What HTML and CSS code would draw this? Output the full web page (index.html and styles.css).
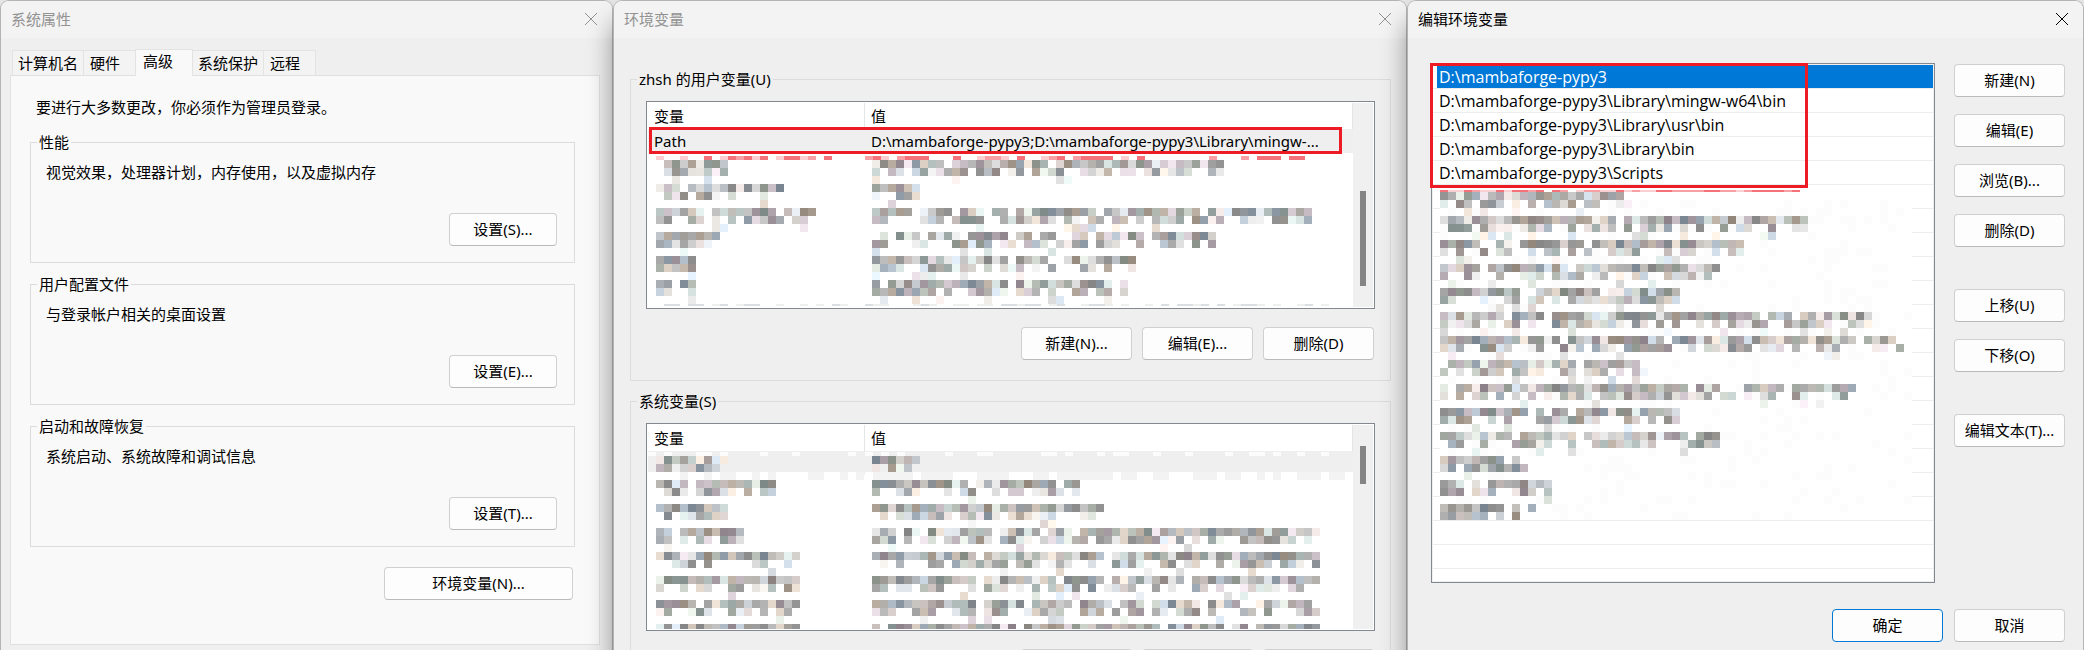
FILE: index.html
```html
<!DOCTYPE html>
<html lang="zh-CN">
<head>
<meta charset="utf-8">
<title>环境变量</title>
<link rel="stylesheet" href="styles.css">
</head>
<body>
<main class="desktop">
  <section class="window inactive" aria-label="系统属性">
    <header class="titlebar">
      <h1>系统属性</h1>
      <button class="close" type="button" aria-label="关闭"><svg viewBox="0 0 14 14"><path d="M1 1L13 13M13 1L1 13"/></svg></button>
    </header>
    <div class="props">
      <div class="tabs" role="tablist">
        <button type="button" role="tab" class="tab tab-wide">计算机名</button>
        <button type="button" role="tab" class="tab">硬件</button>
        <button type="button" role="tab" class="tab active" aria-selected="true">高级</button>
        <button type="button" role="tab" class="tab tab-wide">系统保护</button>
        <button type="button" role="tab" class="tab">远程</button>
      </div>
      <div class="panel" role="tabpanel">
        <p class="intro">要进行大多数更改，你必须作为管理员登录。</p>
        <fieldset class="group setting">
          <legend>性能</legend>
          <p>视觉效果，处理器计划，内存使用，以及虚拟内存</p>
          <button class="btn" type="button">设置(S)...</button>
        </fieldset>
        <fieldset class="group setting">
          <legend>用户配置文件</legend>
          <p>与登录帐户相关的桌面设置</p>
          <button class="btn" type="button">设置(E)...</button>
        </fieldset>
        <fieldset class="group setting">
          <legend>启动和故障恢复</legend>
          <p>系统启动、系统故障和调试信息</p>
          <button class="btn" type="button">设置(T)...</button>
        </fieldset>
        <button class="btn env-btn" type="button">环境变量(N)...</button>
      </div>
    </div>
  </section>

  <section class="window inactive" aria-label="环境变量">
    <header class="titlebar">
      <h1>环境变量</h1>
      <button class="close" type="button" aria-label="关闭"><svg viewBox="0 0 14 14"><path d="M1 1L13 13M13 1L1 13"/></svg></button>
    </header>
    <div class="vars">
      <fieldset class="group var-group">
        <legend>zhsh 的用户变量(U)</legend>
        <div class="listview">
          <div class="list-main">
            <table>
              <thead><tr><th class="name-col">变量</th><th>值</th></tr></thead>
              <tbody>
                <tr class="current"><td>Path</td><td>D:\mambaforge-pypy3;D:\mambaforge-pypy3\Library\mingw-...</td></tr>
                <tr class="masked"><td><canvas data-mosaic="userNames"></canvas></td><td><canvas data-mosaic="userValues"></canvas></td></tr>
              </tbody>
            </table>
            <div class="mark mark-row"></div>
          </div>
          <div class="scrollbar"><div class="thumb thumb-user"></div></div>
        </div>
        <div class="actions">
          <button class="btn" type="button">新建(N)...</button>
          <button class="btn" type="button">编辑(E)...</button>
          <button class="btn" type="button">删除(D)</button>
        </div>
      </fieldset>
      <fieldset class="group var-group">
        <legend>系统变量(S)</legend>
        <div class="listview">
          <div class="list-main">
            <table>
              <thead><tr><th class="name-col">变量</th><th>值</th></tr></thead>
              <tbody>
                <tr class="masked first-current"><td><canvas data-mosaic="sysNames"></canvas></td><td><canvas data-mosaic="sysValues"></canvas></td></tr>
              </tbody>
            </table>
          </div>
          <div class="scrollbar"><div class="thumb thumb-sys"></div></div>
        </div>
        <div class="actions">
          <button class="btn" type="button" aria-label="新建"></button>
          <button class="btn" type="button" aria-label="编辑"></button>
          <button class="btn" type="button" aria-label="删除"></button>
        </div>
      </fieldset>
    </div>
  </section>

  <section class="window" aria-label="编辑环境变量">
    <header class="titlebar">
      <h1>编辑环境变量</h1>
      <button class="close" type="button" aria-label="关闭"><svg viewBox="0 0 14 14"><path d="M1 1L13 13M13 1L1 13"/></svg></button>
    </header>
    <div class="editor">
      <div class="editor-main">
        <div class="paths">
          <ul>
            <li class="selected">D:\mambaforge-pypy3</li>
            <li>D:\mambaforge-pypy3\Library\mingw-w64\bin</li>
            <li>D:\mambaforge-pypy3\Library\usr\bin</li>
            <li>D:\mambaforge-pypy3\Library\bin</li>
            <li>D:\mambaforge-pypy3\Scripts</li>
          </ul>
          <canvas data-mosaic="paths"></canvas>
          <div class="mark mark-paths"></div>
        </div>
        <div class="side">
          <button class="btn" type="button">新建(N)</button>
          <button class="btn" type="button">编辑(E)</button>
          <button class="btn" type="button">浏览(B)...</button>
          <button class="btn" type="button">删除(D)</button>
          <button class="btn apart" type="button">上移(U)</button>
          <button class="btn" type="button">下移(O)</button>
          <button class="btn apart" type="button">编辑文本(T)...</button>
        </div>
      </div>
      <footer class="confirm">
        <button class="btn primary" type="button">确定</button>
        <button class="btn" type="button">取消</button>
      </footer>
    </div>
  </section>
</main>
<script src="mosaic.js"></script>
</body>
</html>
```
FILE: styles.css
```css
* { box-sizing: border-box; }
body {
  margin: 0;
  background: #e6e6e6;
  color: #000;
  font: 15px/20px "Noto Sans", "Noto Sans CJK SC", sans-serif;
  overflow: hidden;
}
h1, p, ul { margin: 0; padding: 0; font-size: 15px; font-weight: 400; }
ul { list-style: none; }
button { font: inherit; color: inherit; }
.desktop { display: grid; grid-template-columns: 613fr 794fr 677fr; height: 100vh; overflow: hidden; }

.window {
  display: flex;
  flex-direction: column;
  min-width: 0;
  min-height: 0;
  background: #efefef;
  border: 1px solid #b4b4b4;
  border-bottom: 0;
  border-radius: 9px 9px 0 0;
  box-shadow: 0 22px 26px rgba(0, 0, 0, .4);
}
.titlebar {
  flex: none;
  display: flex;
  align-items: center;
  justify-content: space-between;
  height: 37px;
  padding: 0 14px 2px 10px;
  background: #f3f3f3;
  border-radius: 8px 8px 0 0;
}
.inactive .titlebar { color: #929292; }
.close { display: flex; padding: 0; border: 0; background: none; }
.close svg { width: 14px; height: 14px; fill: none; stroke: currentColor; stroke-width: 1; }

.btn {
  height: 33px;
  padding: 0 4px 2px;
  border: 1px solid #d0d0d0;
  border-bottom-color: #bababa;
  border-radius: 4px;
  background: #fdfdfd;
  white-space: nowrap;
}
.btn.primary { border-color: #0078d4; }

.group { margin: 0; padding: 0; min-width: 0; border: 1px solid #dcdcdc; }
.group legend { margin-left: -9px; padding: 0 2px; }

.props { flex: 1; display: flex; flex-direction: column; min-height: 0; padding: 11px 12px 5px 9px; }
.tabs { display: flex; align-items: flex-end; padding-left: 2px; }
.tab {
  width: 53px;
  height: 25px;
  margin-right: -1px;
  padding: 0 0 1px 6px;
  border: 1px solid #e3e3e3;
  border-bottom: 0;
  background: #f3f3f3;
  text-align: left;
}
.tab-wide { width: 72px; padding-left: 5px; }
.tab.active { position: relative; width: 58px; height: 27px; margin-bottom: -1px; padding: 0 0 5px 7px; background: #f9f9f9; }
.panel {
  flex: 1;
  display: flex;
  flex-direction: column;
  padding: 21px 24px 0 19px;
  border: 1px solid #e0e0e0;
  background: #f9f9f9;
}
.intro { margin: 0 0 15px 6px; }
.setting { margin-bottom: 11px; padding: 10px 17px 16px 15px; }
.setting .btn { display: block; width: 108px; margin: 31px 0 0 auto; }
.env-btn { align-self: flex-end; width: 189px; margin: 9px 2px 0 0; }

.vars { padding: 31px 15px 0 16px; }
.var-group { margin-bottom: 10px; padding: 12px 15px 20px; }
.listview { display: flex; height: 208px; padding: 1px; border: 1px solid #828790; background: #fff; }
.list-main { position: relative; flex: 1; min-width: 0; overflow: hidden; }
table { width: 100%; table-layout: fixed; border-collapse: separate; border-spacing: 0; }
th { height: 26px; padding: 0 6px; border-right: 1px solid #e5e5e5; font-weight: 400; text-align: left; }
.name-col { width: 217px; }
td { height: 24px; padding: 0 6px; overflow: hidden; white-space: nowrap; }
.current td { background: #efefef; }
.masked td { padding: 0; }
.first-current td { background: linear-gradient(#efefef 24px, #fff 24px); }
canvas { display: block; }
.scrollbar { flex: none; width: 20px; background: #f0f0f0; }
.thumb { width: 6px; margin-left: 7px; background: #858585; }
.thumb-user { height: 95px; margin-top: 88px; }
.thumb-sys { height: 38px; margin-top: 21px; }
.actions { display: flex; justify-content: flex-end; gap: 10px; padding: 18px 1px 0 0; }
.actions .btn, .side .btn, .confirm .btn { width: 111px; }

.mark { position: absolute; border: 3px solid #ed1c24; pointer-events: none; }
.mark-row { top: 24px; left: 1px; right: 11px; height: 27px; }
.mark-paths { top: -1px; left: -2px; width: 378px; height: 125px; }

.editor { flex: 1; display: flex; flex-direction: column; min-height: 0; padding: 25px 18px 8px 23px; }
.editor-main { flex: 1; display: flex; gap: 19px; min-height: 0; }
.paths {
  position: relative;
  flex: 1;
  min-width: 0;
  padding: 1px;
  border: 1px solid #828790;
  background: #fff repeating-linear-gradient(#fff 0 23px, #ededed 23px 24px) content-box;
}
.paths li {
  height: 24px;
  padding-left: 6px;
  font: 16px/24px "Open Sans", "Noto Sans CJK SC", sans-serif;
  white-space: nowrap;
}
.paths .selected { height: 23px; margin: 0 0 1px 4px; padding-left: 2px; background: #0078d7; color: #fff; }
.paths canvas { margin-left: 7px; }
.side { display: flex; flex-direction: column; gap: 17px; padding-top: 1px; }
.side .apart { margin-top: 25px; }
.confirm { display: flex; justify-content: flex-end; gap: 11px; padding-top: 26px; }
```
FILE: mosaic.js
```js
// Draws the pixelated cover over private entries. Each number in "rows" is
// the length of one hidden line, in 8px cells.
const CELL = 8;
const LINE = 24;
const mosaics = {
  userNames: { width: 216, height: 155, x: 8, y: 7, rows: [9, 16, 20, 8, 5, 5], pink: 24, foot: true },
  userValues: { width: 488, height: 155, x: 7, y: 7, rows: [44, 6, 55, 43, 33, 32], pink: 58, foot: true },
  sysNames: { width: 216, height: 178, x: 8, y: 5, rows: [9, 15, 9, 11, 18, 18, 18, 18], strip: true },
  sysValues: { width: 488, height: 178, x: 7, y: 5, rows: [6, 26, 29, 56, 56, 56, 56, 56], strip: true },
  paths: { width: 472, height: 335, x: 0, y: 7, rows: [24, 46, 38, 35, 30, 54, 58, 26, 52, 30, 35, 11, 14, 12], pink: 46, white: true }
};
const tints = [
  [0, 0, 0], [4, 0, -4], [-6, 0, 6], [8, -2, -4], [-8, 4, 2],
  [14, 2, -10], [-12, 0, 12], [6, -6, 2], [0, 0, 0], [-4, 4, -4]
];

function randomFrom(seed) {
  let s = seed;
  return () => {
    s = (s * 1664525 + 1013904223) >>> 0;
    return s / 4294967296;
  };
}

function shade(rand, low, high) {
  const level = low + rand() * (high - low);
  const tint = tints[Math.floor(rand() * tints.length)];
  return "rgb(" + tint.map(t => Math.max(0, Math.min(255, Math.round(level + t)))).join(",") + ")";
}

document.querySelectorAll("canvas[data-mosaic]").forEach((canvas, index) => {
  const m = mosaics[canvas.dataset.mosaic];
  const rand = randomFrom(917 + index * 7331);
  canvas.width = m.width;
  canvas.height = m.height;
  const g = canvas.getContext("2d");
  const cell = (x, y, color, h = CELL) => {
    g.fillStyle = color;
    g.fillRect(x, y, CELL, h);
  };

  if (m.white) {
    g.fillStyle = "#fff";
    g.fillRect(0, 4, m.width, m.height);
    for (let y = m.y + 8; y < m.height; y += CELL)
      for (let x = 0; x < m.width; x += CELL)
        if (rand() < 0.16) cell(x, y, "#fcfcfc");
  }
  if (m.strip) {
    for (let x = 0; x < m.width; x += CELL) {
      if (rand() < 0.35) cell(x, 1, "#fcfcfc", 4);
      cell(x, 21, rand() < 0.5 ? "#fff" : "#f3f3f3");
    }
  }
  if (m.pink) {
    const reds = ["#f4727a", "#f7a1a7", "#f9cfd2", "#f4727a"];
    for (let i = 0; i < m.pink; i++) {
      if (rand() < (m.white ? 0.9 : 0.5))
        cell(i * CELL, m.white ? 5 : 3, reds[Math.floor(rand() * 4)], m.white ? 2 : 4);
    }
  }
  m.rows.forEach((length, r) => {
    const y = m.y + r * LINE;
    for (let i = 0; i < length; i++) {
      const x = m.x + i * CELL;
      if (rand() < 0.92) cell(x, y, rand() < 0.75 ? shade(rand, 132, 200) : shade(rand, 200, 242));
      if (rand() < 0.7) cell(x, y + CELL, rand() < 0.5 ? shade(rand, 138, 200) : shade(rand, 205, 246));
      if (rand() < 0.12) cell(x, y + 2 * CELL, shade(rand, 215, 248));
    }
  });
  if (m.foot) {
    for (let x = 0; x < m.width - 16; x += CELL)
      if (rand() < 0.55) cell(x, 151, rand() < 0.5 ? "#dcdfe1" : "#eeeeee", 2);
  }
});
```
